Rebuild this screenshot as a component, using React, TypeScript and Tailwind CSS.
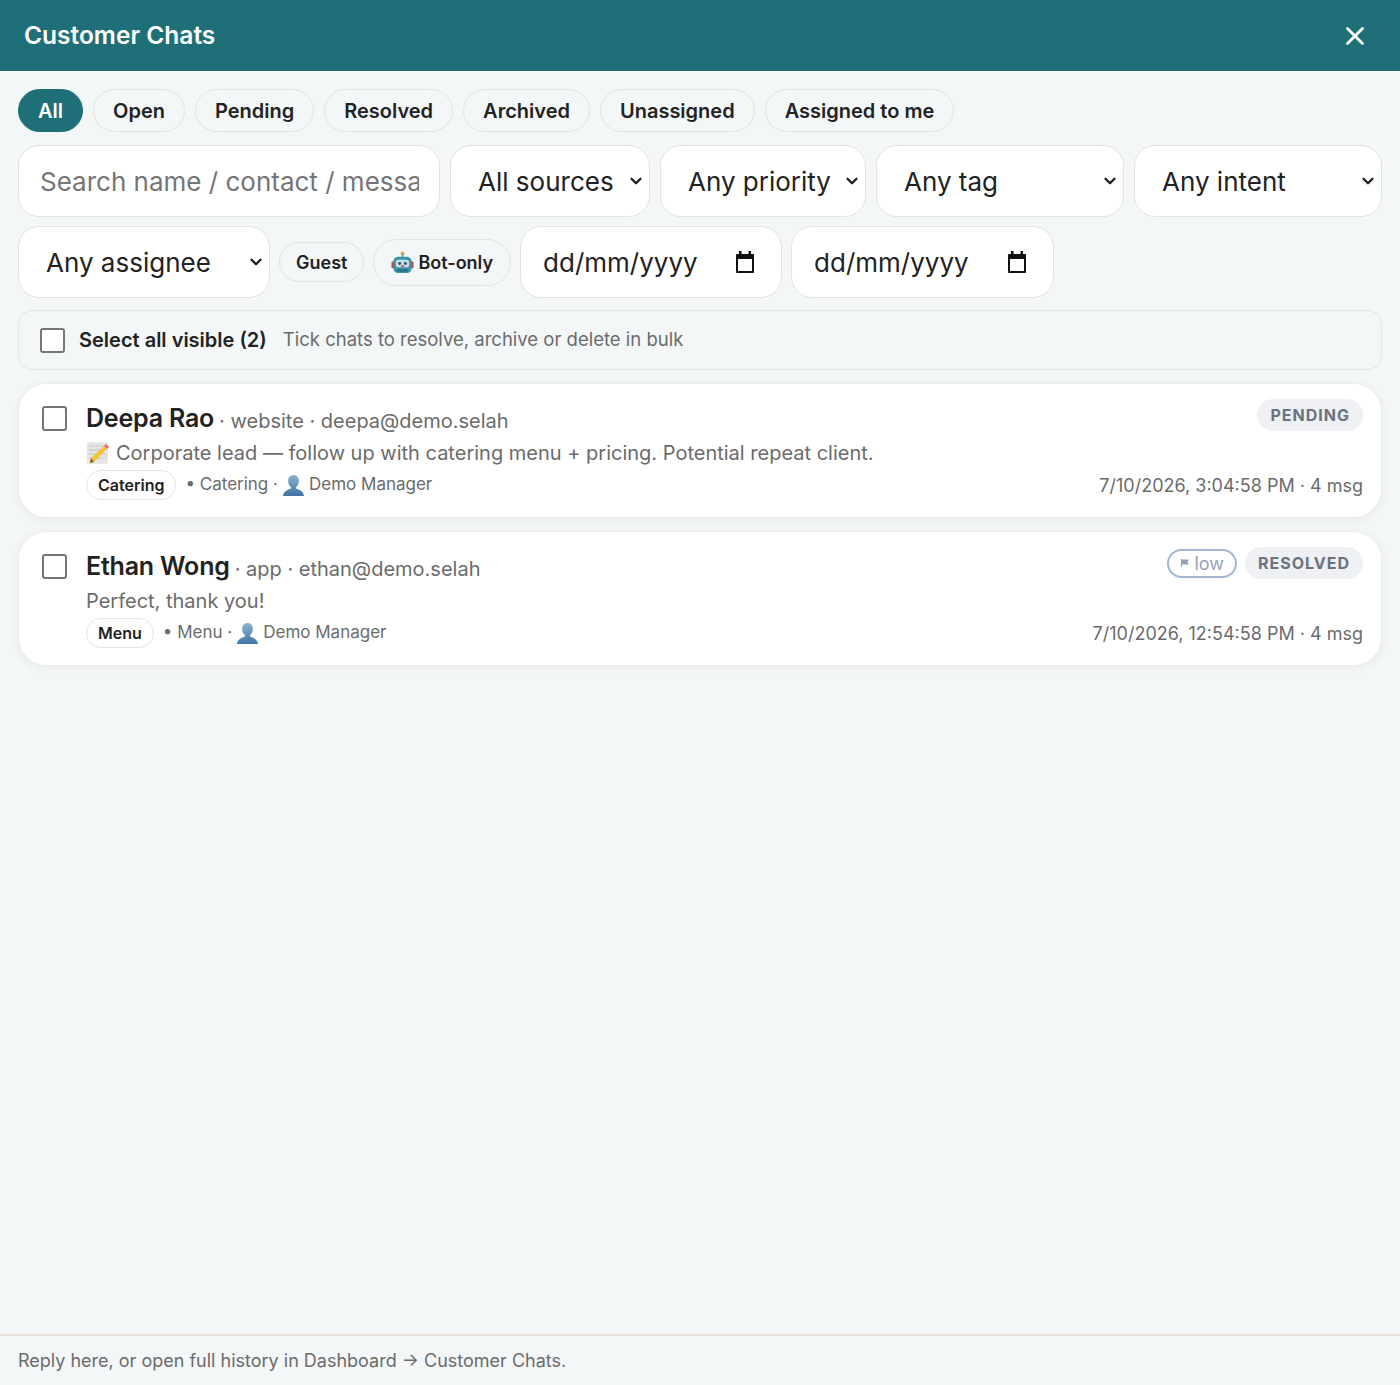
import { ChevronDown, X } from 'lucide-react';
import clsx from 'clsx';

const tabs = ['All', 'Open', 'Pending', 'Resolved', 'Archived', 'Unassigned', 'Assigned to me'];

function MemoIcon() {
    return (
        <svg viewBox="0 0 24 24" className="h-[24px] w-[24px] shrink-0">
            <rect x="1" y="1" width="21" height="22" fill="#e6e6e6" />
            <path d="M3 5h17M3 9h17M3 13h17M3 17h17" stroke="#c4c4c4" strokeWidth="1" />
            <path d="M5 17 18 5l3 3L8 21l-4 1z" fill="#f5c33b" />
            <path d="M18 5l2-2 3 3-2 2z" fill="#e8706a" />
            <path d="M4 22l1-5 3 4z" fill="#7a5a3a" />
        </svg>
    );
}

function BustIcon() {
    return (
        <svg viewBox="0 0 24 24" className="h-[23px] w-[23px] shrink-0">
            <defs>
                <linearGradient id="bust" x1="0" y1="0" x2="0" y2="1">
                    <stop offset="0" stopColor="#8fb3d1" />
                    <stop offset="1" stopColor="#3f74a3" />
                </linearGradient>
            </defs>
            <path
                d="M12 1c3.6 0 5.6 2.6 5.6 6 0 2.9-1.2 5.3-2.9 6.6v1.6c2.5 1.2 7.3 2 8.3 7.8H1c1-5.800 5.800-6.600 8.300-7.800v-1.600C7.600 12.300 6.400 9.900 6.400 7c0-3.400 2-6 5.600-6z"
                fill="url(#bust)"
            />
        </svg>
    );
}

function RobotIcon() {
    return (
        <svg viewBox="0 0 24 24" className="h-[23px] w-[23px] shrink-0">
            <circle cx="12" cy="2.500" r="2" fill="#f2a33a" />
            <rect x="11" y="3" width="2" height="4" fill="#8a9aa5" />
            <rect x="0.500" y="11" width="3" height="7" rx="1" fill="#c0453f" />
            <rect x="20.500" y="11" width="3" height="7" rx="1" fill="#c0453f" />
            <rect x="2.500" y="6" width="19" height="17" rx="5" fill="#3a93a8" />
            <rect x="5" y="9" width="14" height="8" rx="3" fill="#c7dde3" />
            <circle cx="9" cy="13" r="1.500" fill="#2b5563" />
            <circle cx="15" cy="13" r="1.500" fill="#2b5563" />
            <rect x="10.500" y="15" width="3" height="1.500" fill="#c0453f" />
            <rect x="6" y="19" width="12" height="2.500" rx="1" fill="#25707f" />
        </svg>
    );
}

function CalendarIcon() {
    return (
        <svg viewBox="0 0 24 24" className="h-[24px] w-[24px] shrink-0">
            <path d="M6 1h2.500v3h7V1H18v3h2a1 1 0 0 1 1 1v17a1 1 0 0 1-1 1H4a1 1 0 0 1-1-1V5a1 1 0 0 1 1-1h2zM5 9v12h14V9z" fill="#111" />
        </svg>
    );
}

function FakeSelect({ label, className, pad }: { label: string; className: string; pad: string }) {
    return (
        <div
            className={clsx(
                'flex h-[72px] items-center justify-between rounded-[21px] border border-[#e8e2da] bg-white text-[26px] text-[#222]',
                pad,
                className
            )}
        >
            <span>{label}</span>
            <ChevronDown size={18} strokeWidth={3.2} className="text-[#222]" />
        </div>
    );
}

function DateBox({ className }: { className: string }) {
    return (
        <div
            className={clsx(
                'flex h-[72px] items-center justify-between rounded-[21px] border border-[#e8e2da] bg-white pr-[24px] pl-[22px] text-[26px] text-[#222]',
                className
            )}
        >
            <span>dd/mm/yyyy</span>
            <CalendarIcon />
        </div>
    );
}

function Tag({ label }: { label: string }) {
    return (
        <span className="rounded-full border border-[#e8e2da] bg-white px-[11px] py-[3px] text-[16px] leading-[22px] font-semibold text-[#222]">
            {label}
        </span>
    );
}

function Status({ label }: { label: string }) {
    return (
        <span className="rounded-full bg-[#eef0f3] px-[13px] py-[5px] text-[16px] leading-[22px] font-bold tracking-[1px] text-[#6b7280]">
            {label}
        </span>
    );
}

type ChatCardProps = {
    name: string;
    meta: string;
    preview: string;
    memo?: boolean;
    topic: string;
    time: string;
    status: string;
    low?: boolean;
};

function ChatCard({ name, meta, preview, memo, topic, time, status, low }: ChatCardProps) {
    return (
        <div className="flex h-[135px] rounded-[28px] border border-[#f0ebe4] bg-white pt-[15px] pr-[18px] pl-[23px] shadow-[0_2px_10px_rgba(17,24,39,0.06)]">
            <div className="mt-[7px] mr-[19px] h-[25px] w-[25px] shrink-0 rounded-[3px] border-2 border-[#767676] bg-white" />
            <div className="min-w-0 flex-1">
                <div className="flex items-start justify-between">
                    <div className="flex h-[40px] items-center text-[#6b6b6b]">
                        <span className="text-[25px] font-semibold tracking-[-0.2px] text-[#222]">{name}</span>
                        <span className="ml-[5px] pt-[3px] text-[20px]">· {meta}</span>
                    </div>
                    <div className="flex items-center gap-[8px]">
                        {low ? (
                            <span className="flex items-center gap-[4px] rounded-full border-2 border-[#a5b7d3] px-[11px] text-[18px] leading-[25px] text-[#94a3b8]">
                                <svg viewBox="0 0 10 10" className="h-[10px] w-[10px]">
                                    <path d="M1.500 1v8" stroke="#94a3b8" strokeWidth="1" />
                                    <path d="M2 1.500h7L7.500 4 9 6.500H2z" fill="#94a3b8" />
                                </svg>
                                low
                            </span>
                        ) : null}
                        <Status label={status} />
                    </div>
                </div>
                <div className="flex h-[28px] items-center gap-[6px] text-[20px] text-[#6b6b6b]">
                    {memo ? <MemoIcon /> : null}
                    <span>{preview}</span>
                </div>
                <div className="mt-[3px] flex items-center justify-between text-[#6b6b6b]">
                    <div className="flex items-center text-[17px]">
                        <Tag label={topic} />
                        <span className="ml-[9px]">• {topic} ·</span>
                        <span className="mr-[4px] ml-[4px]"><BustIcon /></span>
                        <span>Demo Manager</span>
                    </div>
                    <span className="text-[18px]">{time}</span>
                </div>
            </div>
        </div>
    );
}

export default function App() {
    return (
        <div className="flex h-screen flex-col bg-[#f3f7f8] font-['Inter',sans-serif] text-[#222]">
            <header className="flex h-[71px] shrink-0 items-center justify-between bg-[#1f6f78] pr-[30px] pl-[24px] text-white">
                <h1 className="text-[24.500px] font-semibold">Customer Chats</h1>
                <X size={30} strokeWidth={2.2} />
            </header>

            <main className="flex flex-1 flex-col px-[18px] pt-[18px]">
                <div className="flex gap-[10px]">
                    {tabs.map((tab) => (
                        <span
                            key={tab}
                            className={clsx(
                                'flex h-[43px] items-center rounded-full border px-[19px] text-[20px] font-semibold',
                                tab === 'All'
                                    ? 'border-[#1f6f78] bg-[#1f6f78] text-white'
                                    : 'border-[#e8e2da] text-[#222]'
                            )}
                        >
                            {tab}
                        </span>
                    ))}
                </div>

                <div className="mt-[13px] flex gap-[10px]">
                    <div className="flex h-[72px] w-[422px] items-center overflow-hidden rounded-[21px] border border-[#e8e2da] bg-white pr-[20px] pl-[21px] text-[26px] text-[#757575]">
                        <span className="overflow-hidden whitespace-nowrap">Search name / contact / message</span>
                    </div>
                    <FakeSelect label="All sources" className="w-[200px]" pad="pr-[4px] pl-[27px]" />
                    <FakeSelect label="Any priority" className="w-[206px]" pad="pr-[4px] pl-[27px]" />
                    <FakeSelect label="Any tag" className="w-[248px]" pad="pr-[4px] pl-[27px]" />
                    <FakeSelect label="Any intent" className="w-[248px]" pad="pr-[4px] pl-[27px]" />
                </div>

                <div className="mt-[9px] flex items-center gap-[9px]">
                    <FakeSelect label="Any assignee" className="w-[252px]" pad="pr-[4px] pl-[27px]" />
                    <span className="flex h-[40px] items-center rounded-full border border-[#e8e2da] px-[16px] text-[18px] font-semibold">
                        Guest
                    </span>
                    <span className="flex h-[47px] items-center gap-[4px] rounded-full border border-[#e8e2da] px-[17px] text-[18px] font-semibold">
                        <RobotIcon />
                        Bot-only
                    </span>
                    <DateBox className="w-[262px]" />
                    <DateBox className="w-[263px]" />
                </div>

                <div className="mt-[12px] flex h-[60px] items-center rounded-[14px] border border-[#e8e2da] pl-[21px]">
                    <div className="h-[25px] w-[25px] rounded-[3px] border-2 border-[#767676] bg-white" />
                    <span className="ml-[14px] text-[20px] font-semibold">Select all visible (2)</span>
                    <span className="ml-[16px] text-[18.500px] text-[#6b6b6b]">
                        Tick chats to resolve, archive or delete in bulk
                    </span>
                </div>

                <div className="mt-[13px] flex flex-col gap-[13px]">
                    <ChatCard
                        name="Deepa Rao"
                        meta="website · deepa@demo.selah"
                        memo
                        preview="Corporate lead — follow up with catering menu + pricing. Potential repeat client."
                        topic="Catering"
                        time="7/10/2026, 3:04:58 PM · 4 msg"
                        status="PENDING"
                    />
                    <ChatCard
                        name="Ethan Wong"
                        meta="app · ethan@demo.selah"
                        preview="Perfect, thank you!"
                        topic="Menu"
                        time="7/10/2026, 12:54:58 PM · 4 msg"
                        status="RESOLVED"
                        low
                    />
                </div>
            </main>

            <footer className="flex h-[51px] shrink-0 items-center border-t-2 border-[#e8e2da] px-[18px] text-[18px] text-[#6b6b6b]">
                Reply here, or open full history in Dashboard → Customer Chats.
            </footer>
        </div>
    );
}
